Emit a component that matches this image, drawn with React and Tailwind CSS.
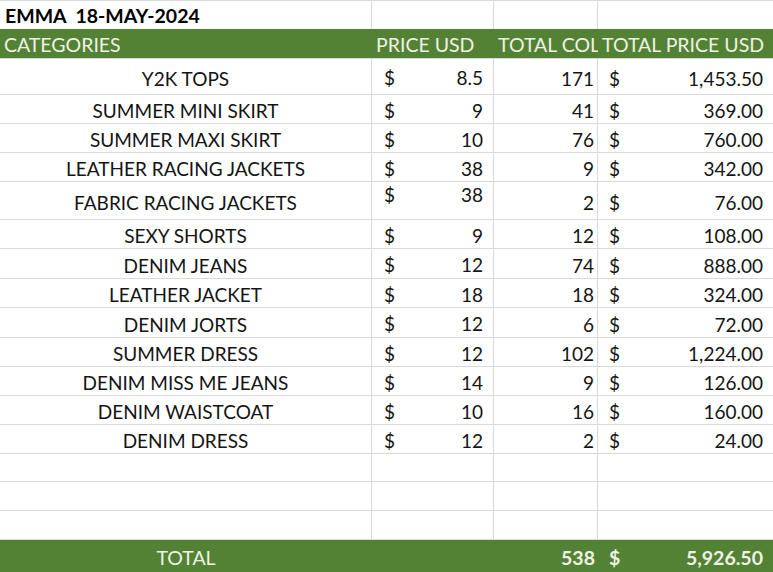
import React from 'react';

const rows = [
  { name: 'Y2K TOPS', price: '8.5', qty: '171', total: '1,453.50', h: 'h-[36px]', pt: 'pt-[8px]' },
  { name: 'SUMMER MINI SKIRT', price: '9', qty: '41', total: '369.00', h: 'h-[29px]', pt: 'pt-[5px]' },
  { name: 'SUMMER MAXI SKIRT', price: '10', qty: '76', total: '760.00', h: 'h-[29px]', pt: 'pt-[5px]' },
  { name: 'LEATHER RACING JACKETS', price: '38', qty: '9', total: '342.00', h: 'h-[29px]', pt: 'pt-[5px]' },
  { name: 'FABRIC RACING JACKETS', price: '38', qty: '2', total: '76.00', h: 'h-[38px]', pt: 'pt-[2px]' },
  { name: 'SEXY SHORTS', price: '9', qty: '12', total: '108.00', h: 'h-[29px]', pt: 'pt-[5px]' },
  { name: 'DENIM JEANS', price: '12', qty: '74', total: '888.00', h: 'h-[30px]', pt: 'pt-[5px]' },
  { name: 'LEATHER JACKET', price: '18', qty: '18', total: '324.00', h: 'h-[29px]', pt: 'pt-[5px]' },
  { name: 'DENIM JORTS', price: '12', qty: '6', total: '72.00', h: 'h-[30px]', pt: 'pt-[5px]' },
  { name: 'SUMMER DRESS', price: '12', qty: '102', total: '1,224.00', h: 'h-[29px]', pt: 'pt-[5px]' },
  { name: 'DENIM MISS ME JEANS', price: '14', qty: '9', total: '126.00', h: 'h-[29px]', pt: 'pt-[5px]' },
  { name: 'DENIM WAISTCOAT', price: '10', qty: '16', total: '160.00', h: 'h-[29px]', pt: 'pt-[5px]' },
  { name: 'DENIM DRESS', price: '12', qty: '2', total: '24.00', h: 'h-[29px]', pt: 'pt-[5px]' },
];

const emptyHeights = ['h-[28px]', 'h-[29px]', 'h-[29px]'];

const cols = 'grid grid-cols-[372px_122px_104px_1fr]';
const line = 'border-[#d9d9d9]';

function DataRow({ r }) {
  return (
    <div className={`${cols} ${r.h} border-b ${line} text-[19px] leading-[22px] text-[#141414]`}>
      <div className={`border-r ${line} flex items-center justify-center pt-[4px] whitespace-nowrap`}>{r.name}</div>
      <div className={`border-r ${line} flex items-start justify-between ${r.pt} pl-[12px] pr-[10px]`}>
        <span>$</span>
        <span>{r.price}</span>
      </div>
      <div className={`border-r ${line} flex items-center justify-end pt-[4px] pr-[3px]`}>{r.qty}</div>
      <div className="flex items-center justify-between pt-[4px] pl-[11px] pr-[10px]">
        <span>$</span>
        <span>{r.total}</span>
      </div>
    </div>
  );
}

export default function App() {
  return (
    <div className="w-[773px] h-[572px] bg-white overflow-hidden font-['Lato','Liberation_Sans',sans-serif]">
      <div className={`${cols} h-[29px] border-t ${line}`}>
        <div className={`border-r ${line} flex items-end pl-[5px] pb-[2px] text-[19.5px] leading-[22px] font-bold text-black whitespace-nowrap`}>
          EMMA&nbsp;&nbsp;18-MAY-2024
        </div>
        <div className={`border-r ${line}`} />
        <div className={`border-r ${line}`} />
        <div />
      </div>
      <div className={`${cols} h-[30px] bg-[#548235] text-[19.5px] leading-[22px] text-[#eef2e6] border-b ${line}`}>
        <div className="flex items-end pl-[4px] pb-[2px]">CATEGORIES</div>
        <div className="flex items-end pl-[4px] pb-[2px] whitespace-nowrap">PRICE USD</div>
        <div className="flex items-end pl-[4px] pb-[2px] whitespace-nowrap overflow-hidden">TOTAL COLLECTED</div>
        <div className="flex items-end pl-[4px] pb-[2px] whitespace-nowrap">TOTAL PRICE USD</div>
      </div>
      {rows.map((r) => (
        <DataRow key={r.name} r={r} />
      ))}
      {emptyHeights.map((h, i) => (
        <div key={i} className={`${cols} ${h} border-b ${line}`}>
          <div className={`border-r ${line}`} />
          <div className={`border-r ${line}`} />
          <div className={`border-r ${line}`} />
          <div />
        </div>
      ))}
      <div className={`${cols} h-[32px] bg-[#548235] text-[19.5px] leading-[22px] text-[#eef2e6]`}>
        <div className="flex items-end justify-center pb-[3px]">TOTAL</div>
        <div />
        <div className="flex items-end justify-end pb-[3px] pr-[3px] font-bold">538</div>
        <div className="flex items-end justify-between pb-[3px] pl-[11px] pr-[10px] font-bold">
          <span>$</span>
          <span>5,926.50</span>
        </div>
      </div>
    </div>
  );
}
